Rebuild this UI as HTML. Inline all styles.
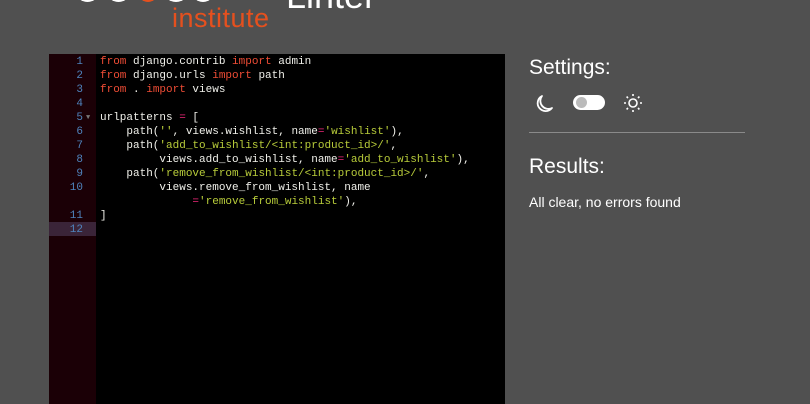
<!DOCTYPE html>
<html><head><style>
body{margin:0;width:810px;height:404px;background:#505050;overflow:hidden;position:relative;font-family:"Liberation Sans",sans-serif}
.ed{position:absolute;left:49px;top:54px;width:456px;height:350px;background:#000}
.gut{position:absolute;left:0;top:0;width:47px;height:350px;background:#1b0006}
.code{position:absolute;left:0;top:1px;font:11px/14px "Liberation Mono",monospace;color:#f0f0ea;white-space:pre}
.ln{position:absolute;left:0;width:34px;text-align:right;color:#4f83bd}
.l{position:absolute;left:51px}
.k{color:#ee4c35}.s{color:#b8cc3a}.o{color:#f0287a}
.hl{position:absolute;left:0;top:168px;width:47px;height:14px;background:#3a2438}
.ic{position:absolute}
</style></head><body>
<div style="position:absolute;left:75px;top:-23px;width:25px;height:25px;border-radius:50%;background:#fff"></div>
<div style="position:absolute;left:106px;top:-23px;width:25px;height:25px;border-radius:50%;background:#fff"></div>
<div style="position:absolute;left:137px;top:-23px;width:22px;height:25px;border-radius:50%;background:#e5501e"></div>
<div style="position:absolute;left:163px;top:-23px;width:26px;height:25px;border-radius:50%;background:#fff"></div>
<div style="position:absolute;left:191px;top:-23px;width:24px;height:25px;border-radius:50%;background:#fff"></div>
<div style="position:absolute;left:172px;top:3px;font-size:27px;color:#e5501e;letter-spacing:0.5px">institute</div>
<div style="position:absolute;left:286px;top:-25px;font-size:36px;color:#fff">Linter</div>
<div class="ed"><div class="gut"></div><div class="hl"></div>
<div class="code">
<span class="ln" style="top:0">1</span><span class="l" style="top:0"><span class="k">from</span> django.contrib <span class="k">import</span> admin</span>
<span class="ln" style="top:14px">2</span><span class="l" style="top:14px"><span class="k">from</span> django.urls <span class="k">import</span> path</span>
<span class="ln" style="top:28px">3</span><span class="l" style="top:28px"><span class="k">from</span> . <span class="k">import</span> views</span>
<span class="ln" style="top:42px">4</span>
<span class="ln" style="top:56px">5</span><span style="position:absolute;left:37px;top:56px;color:#777;font-size:7px">▼</span><span class="l" style="top:56px">urlpatterns <span class="o">=</span> [</span>
<span class="ln" style="top:70px">6</span><span class="l" style="top:70px">    path(<span class="s">''</span>, views.wishlist, name<span class="o">=</span><span class="s">'wishlist'</span>),</span>
<span class="ln" style="top:84px">7</span><span class="l" style="top:84px">    path(<span class="s">'add_to_wishlist/&lt;int:product_id&gt;/'</span>,</span>
<span class="ln" style="top:98px">8</span><span class="l" style="top:98px">         views.add_to_wishlist, name<span class="o">=</span><span class="s">'add_to_wishlist'</span>),</span>
<span class="ln" style="top:112px">9</span><span class="l" style="top:112px">    path(<span class="s">'remove_from_wishlist/&lt;int:product_id&gt;/'</span>,</span>
<span class="ln" style="top:126px">10</span><span class="l" style="top:126px">         views.remove_from_wishlist, name</span>
<span class="l" style="top:140px">              <span class="o">=</span><span class="s">'remove_from_wishlist'</span>),</span>
<span class="ln" style="top:154px">11</span><span class="l" style="top:154px">]</span>
<span class="ln" style="top:168px">12</span>
</div></div>
<div style="position:absolute;left:529px;top:56px;font-size:21px;color:#fff">Settings:</div>
<svg class="ic" style="left:533px;top:93px" width="22" height="22" viewBox="0 0 22 22"><path d="M9 3 A8 8 0 1 0 19 15 A8 8 0 0 1 9 3Z" fill="none" stroke="#fff" stroke-width="1.8" stroke-linejoin="round"/></svg>
<div style="position:absolute;left:573px;top:95px;width:32px;height:15px;border-radius:8px;background:#fff"></div>
<div style="position:absolute;left:576px;top:97px;width:11px;height:11px;border-radius:50%;background:#bbb"></div>
<svg class="ic" style="left:623px;top:93px" width="20" height="20" viewBox="0 0 20 20"><circle cx="10" cy="10" r="4" fill="none" stroke="#fff" stroke-width="1.6"/><g stroke="#fff" stroke-width="1.6"><path d="M10 1v2M10 17v2M1 10h2M17 10h2M3.6 3.6l1.4 1.4M15 15l1.4 1.4M3.6 16.4l1.4-1.4M15 5l1.4-1.4"/></g></svg>
<div style="position:absolute;left:529px;top:132px;width:216px;height:1px;background:#8a8a8a"></div>
<div style="position:absolute;left:529px;top:155px;font-size:21px;color:#fff">Results:</div>
<div style="position:absolute;left:529px;top:194px;font-size:14px;color:#fff">All clear, no errors found</div>
</body></html>
